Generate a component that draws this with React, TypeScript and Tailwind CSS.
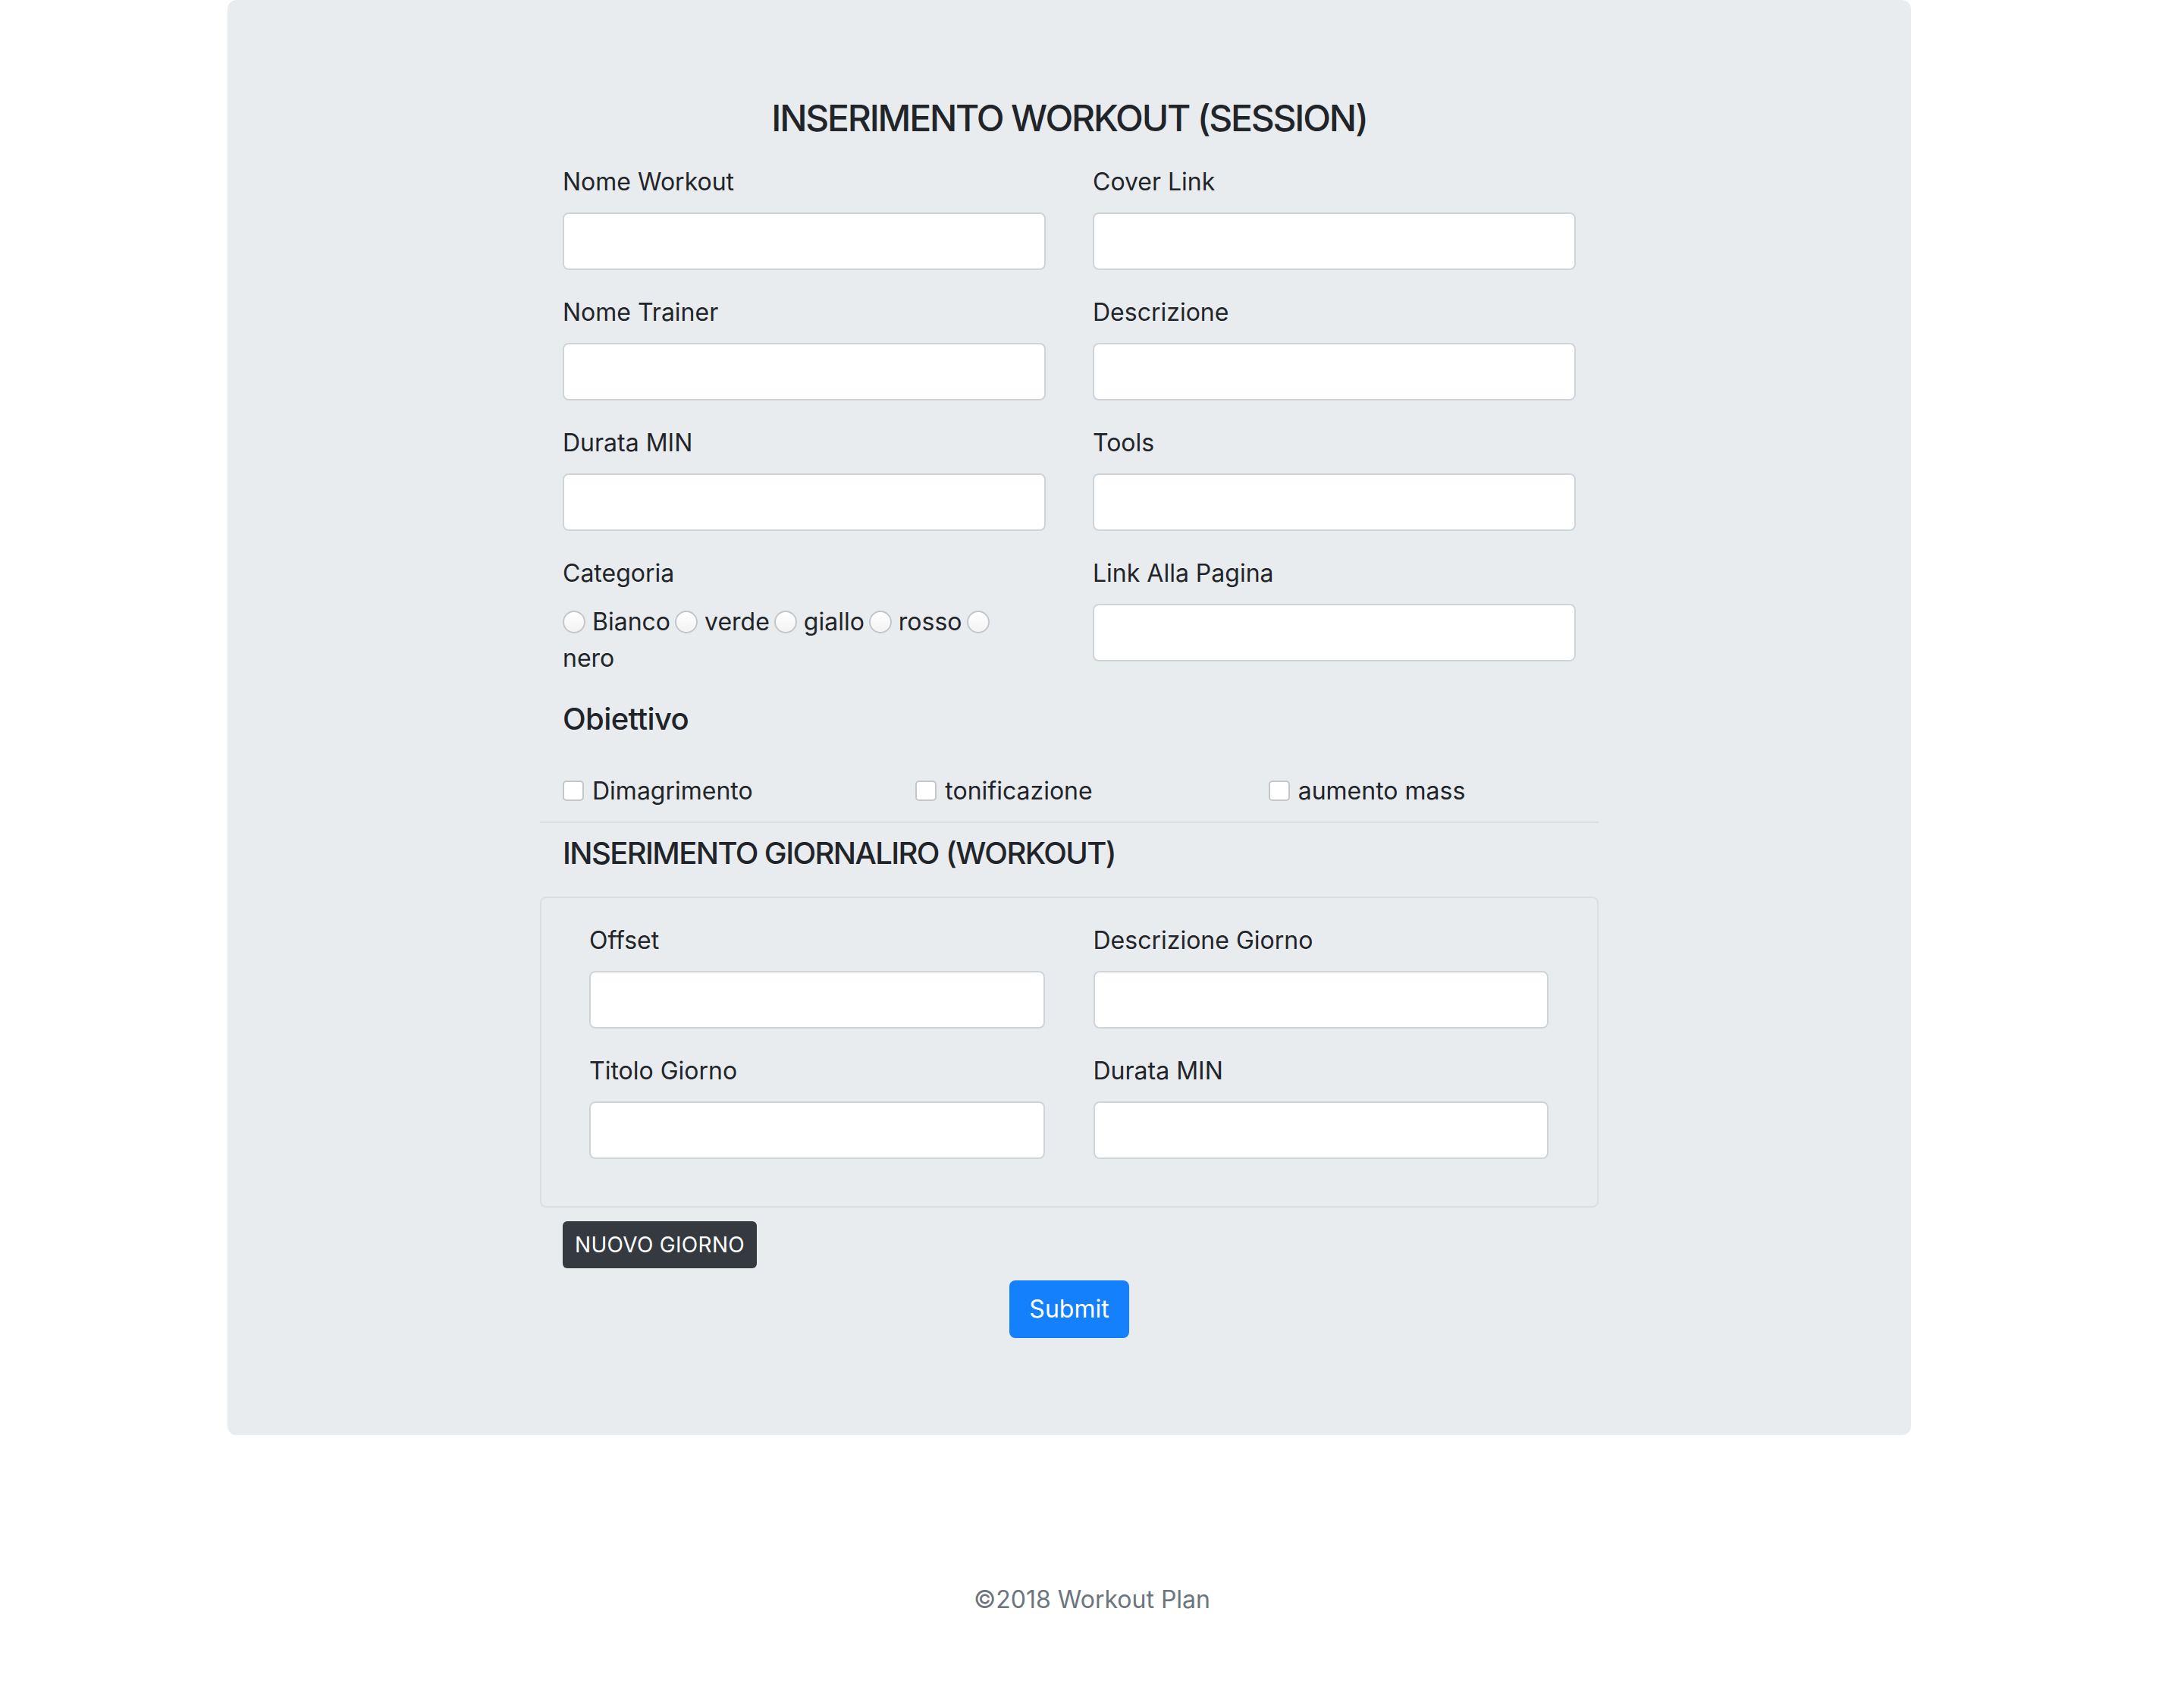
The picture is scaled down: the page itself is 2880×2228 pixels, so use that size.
import React from "react";

type FieldProps = {
  label: string;
};

function Field({ label }: FieldProps) {
  return (
    <div className="mb-[32px]">
      <label className="block mb-[16px]">{label}</label>
      <input
        type="text"
        className="block w-full h-[76px] bg-white border-2 border-[#ced4da] rounded-[8px] px-[24px] outline-none"
      />
    </div>
  );
}

function Radio({ label }: { label?: string }) {
  return (
    <span className="flex items-center">
      <span className="inline-block w-[30px] h-[30px] rounded-full border-2 border-[#c4c6c9] bg-gradient-to-b from-white to-[#f3f3f3]" />
      {label && <span className="ml-[9px] mr-[6px]">{label}</span>}
    </span>
  );
}

function Check({ label }: { label: string }) {
  return (
    <div className="pl-[30px] flex items-center h-[48px]">
      <span className="inline-block w-[28px] h-[27px] rounded-[5px] border-2 border-[#c4c6c9] bg-white" />
      <span className="ml-[11px]">{label}</span>
    </div>
  );
}

export default function App() {
  return (
    <div className="min-h-[2228px] bg-white font-['Inter','Liberation_Sans',sans-serif] text-[#212529] text-[32px] leading-[48px]">
      {/* Jumbotron */}
      <div className="ml-[300px] w-[2220px] bg-[#e9ecef] rounded-[12px] px-[412px] pt-[127px] pb-[128px]">
        <div className="px-[30px]">
          <h4 className="text-center text-[48px] leading-[57.6px] font-medium mb-[31px] tracking-[-2.2px]">
            INSERIMENTO WORKOUT (SESSION)
          </h4>
          <div className="grid grid-cols-2 gap-x-[62px]">
            <Field label="Nome Workout" />
            <Field label="Cover Link" />
            <Field label="Nome Trainer" />
            <Field label="Descrizione" />
            <Field label="Durata MIN" />
            <Field label="Tools" />
            <div className="mb-[32px]">
              <label className="block mb-[16px]">Categoria</label>
              <div className="flex items-center">
                <Radio label="Bianco" />
                <Radio label="verde" />
                <Radio label="giallo" />
                <Radio label="rosso" />
                <Radio />
              </div>
              <div>nero</div>
            </div>
            <Field label="Link Alla Pagina" />
          </div>
          <h5 className="text-[40px] leading-[48px] font-medium mb-[47px] tracking-[-0.6px]">Obiettivo</h5>
        </div>

        {/* Obiettivo */}
        <div className="grid grid-cols-3">
          <Check label="Dimagrimento" />
          <Check label="tonificazione" />
          <Check label="aumento mass" />
        </div>

        <div className="mt-[16px] h-[2px] bg-[#dcdfe2]" />

        <h5 className="px-[30px] mt-[16px] mb-[33px] text-[40px] leading-[48px] font-medium tracking-[-1.6px]">
          INSERIMENTO GIORNALIRO (WORKOUT)
        </h5>

        {/* Giorno */}
        <div className="border-2 border-[#dcdfe2] rounded-[8px] pt-[32px] pb-[30px] pl-[63px] pr-[64px]">
          <div className="grid grid-cols-2 gap-x-[64px]">
            <Field label="Offset" />
            <Field label="Descrizione Giorno" />
            <Field label="Titolo Giorno" />
            <Field label="Durata MIN" />
          </div>
        </div>

        <div className="px-[30px] mt-[18px]">
          <button className="h-[62px] px-[16px] rounded-[6px] bg-[#343a40] text-white text-[28px] leading-[42px] tracking-[0.3px]">
            NUOVO GIORNO
          </button>
        </div>

        <div className="flex justify-center mt-[16px]">
          <button className="h-[76px] px-[26px] rounded-[8px] bg-[#1580fb] text-white text-[32px] leading-[48px]">
            Submit
          </button>
        </div>
      </div>

      {/* Footer */}
      <div className="mt-[193px] text-center text-[#6c757d]">©2018 Workout Plan</div>
    </div>
  );
}
